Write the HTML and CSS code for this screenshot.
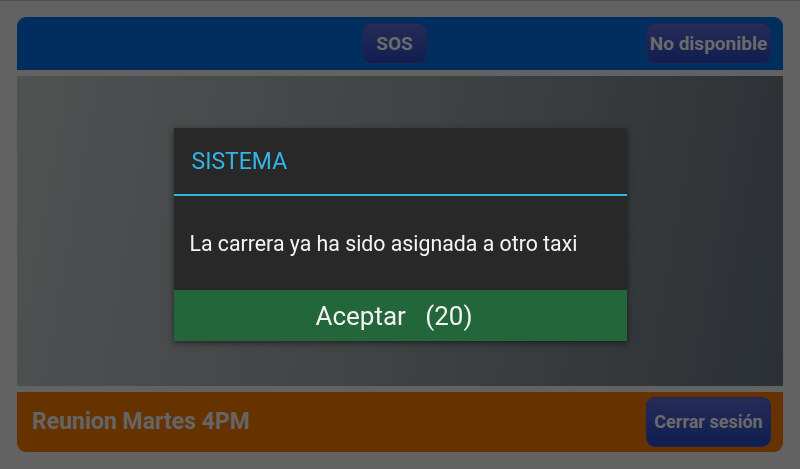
FILE: index.html
```html
<!DOCTYPE html>
<html lang="es">
<head>
<meta charset="UTF-8">
<meta name="viewport" content="width=device-width, initial-scale=1.0">
<title>Taxi</title>
<link rel="stylesheet" href="styles.css">
</head>
<body>
    <div class="app">
        <div class="topbar">
            <button class="btn btn-sos">SOS</button>
            <button class="btn btn-estado">No disponible</button>
        </div>

        <div class="main"></div>

        <div class="bottombar">
            <span class="aviso">Reunion Martes 4PM</span>
            <button class="btn btn-salir">Cerrar sesión</button>
        </div>
    </div>

    <!-- dialogo del sistema -->
    <div class="overlay">
        <div class="dialog">
            <div class="dialog-title">SISTEMA</div>
            <div class="dialog-msg">La carrera ya ha sido asignada a otro taxi</div>
            <button class="dialog-btn">Aceptar&nbsp;&nbsp;&nbsp;(20)</button>
        </div>
    </div>
</body>
</html>
```

FILE: styles.css
```css
html, body {
    height: 100%;
}
body {
    margin: 0;
    padding: 0;
    background-color: #626262;
    border-top: 1px solid #4e4e4e;
    box-sizing: border-box;
    font-family: Roboto, "Liberation Sans", sans-serif;
}
.app {
    display: flex;
    flex-direction: column;
    gap: 6px;
    padding: 16px 17px 0 17px;
}
.topbar {
    height: 53px;
    background-color: #002f5f;
    border-radius: 9px 9px 0 0;
    display: flex;
    align-items: center;
    justify-content: flex-end;
    gap: 219px;
    padding-right: 12px;
}
.btn {
    font-family: Roboto, "Liberation Sans", sans-serif;
    font-weight: bold;
    font-size: 19px;
    color: #6b6b6b;
    background: linear-gradient(to bottom, #272b57, #0f1e50);
    border: 1px solid #1d2554;
    border-radius: 9px;
    padding: 0;
}
.btn-sos {
    width: 65px;
    height: 41px;
}
.btn-estado {
    width: 125px;
    height: 41px;
}
.main {
    height: 310px;
    background: linear-gradient(100deg, #505252 0%, #404344 50%, #2b3034 100%);
}
.bottombar {
    height: 59px;
    background-color: #663300;
    border-radius: 0 0 9px 9px;
    display: flex;
    align-items: center;
    justify-content: space-between;
    padding: 0 12px 1px 15px;
}
.aviso {
    font-weight: bold;
    font-size: 23px;
    color: #656565;
}
.btn-salir {
    width: 125px;
    height: 50px;
    font-size: 18px;
}
.overlay {
    position: fixed;
    top: 0;
    left: 0;
    width: 100%;
    height: 100%;
    display: flex;
    align-items: center;
    justify-content: center;
}
.dialog {
    width: 453px;
    background-color: #282828;
    box-shadow: 0 2px 6px rgba(0, 0, 0, 0.5);
    display: flex;
    flex-direction: column;
}
.dialog-title {
    height: 68px;
    box-sizing: border-box;
    padding-left: 18px;
    display: flex;
    align-items: center;
    font-size: 23px;
    color: #33b5e5;
    border-bottom: 2px solid #33b5e5;
}
.dialog-msg {
    height: 94px;
    padding-left: 16px;
    display: flex;
    align-items: center;
    font-size: 21.3px;
    color: #f4f4f4;
}
.dialog-btn {
    height: 51px;
    border: none;
    background-color: #23663a;
    color: #f2f2f2;
    font-family: Roboto, "Liberation Sans", sans-serif;
    font-size: 26px;
    padding: 0 12px 0 0;
}
```
